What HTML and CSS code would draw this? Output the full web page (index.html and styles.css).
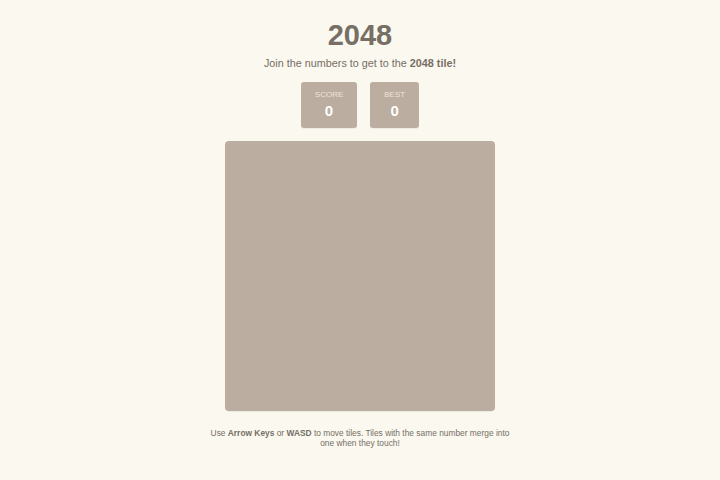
FILE: index.html
```html
<!DOCTYPE html>
<html>
<head>
<meta charset="utf-8">
<link rel="stylesheet" href="styles.css">
</head>
<body>
<div class="container">
  <h1 class="title">2048</h1>
  <p class="subtitle">Join the numbers to get to the <strong>2048 tile!</strong></p>
  <div class="scores">
    <div class="score-box"><div class="label">SCORE</div><div class="value">0</div></div>
    <div class="score-box"><div class="label">BEST</div><div class="value">0</div></div>
  </div>
  <div class="board"></div>
  <p class="instructions">Use <strong>Arrow Keys</strong> or <strong>WASD</strong> to move tiles. Tiles with the same number merge into one when they touch!</p>
</div>
</body>
</html>
```
FILE: styles.css
```css
html, body {
  margin: 0;
  padding: 0;
  background: #faf8ef;
  font-family: "Liberation Sans", Arial, sans-serif;
  color: #776e65;
}
.container {
  display: flex;
  flex-direction: column;
  align-items: center;
  padding-top: 19px;
}
.title {
  margin: 0;
  font-size: 29px;
  line-height: 33px;
  font-weight: bold;
}
.subtitle {
  margin: 5px 0 0;
  font-size: 10.8px;
  line-height: 13px;
}
.scores {
  display: flex;
  gap: 13px;
  margin-top: 12px;
}
.score-box {
  background: #bbada0;
  border-radius: 3px;
  padding: 8px 14px 6px;
  height: 32px;
  display: flex;
  flex-direction: column;
  align-items: center;
  box-shadow: 0 1px 1px rgba(0, 0, 0, 0.06);
}
.label {
  color: #eee4da;
  font-size: 8px;
  line-height: 10px;
}
.value {
  color: #ffffff;
  font-size: 15px;
  font-weight: bold;
  line-height: 22px;
}
.board {
  width: 270px;
  height: 270px;
  margin-top: 13px;
  background: #bbada0;
  border-radius: 4px;
  box-shadow: 0 1px 1px rgba(0, 0, 0, 0.06);
}
.instructions {
  margin: 18px 0 0;
  max-width: 304px;
  text-align: center;
  font-size: 8.4px;
  line-height: 9.5px;
}
```
